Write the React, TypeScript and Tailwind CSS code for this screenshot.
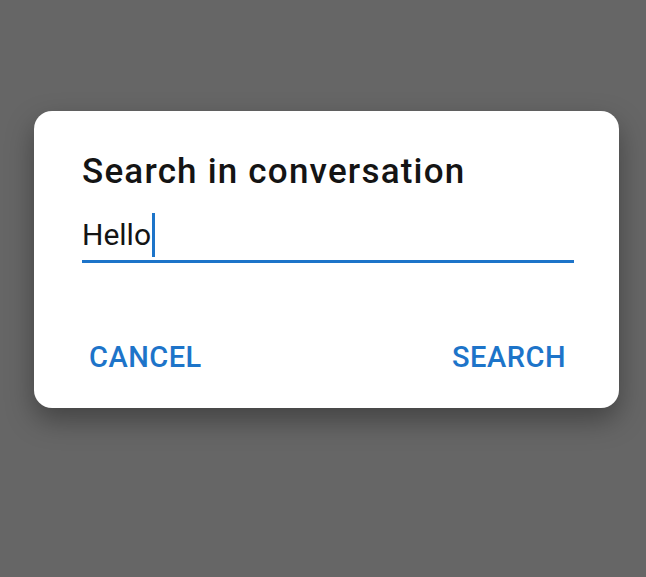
export default function App() {
  return (
    <div
      className="w-[646px] h-[577px] bg-[#666666] pl-[34px] pt-[111px]"
      style={{ fontFamily: "Roboto, 'Noto Sans', sans-serif" }}
    >
      <div className="w-[585px] h-[297px] bg-white rounded-[18px] shadow-[0_12px_28px_rgba(0,0,0,0.35)] pt-[40px] px-[48px] flex flex-col">
        <h1 className="text-[35px] leading-[41px] font-medium text-[#141414] tracking-[1.2px]">
          Search in conversation
        </h1>
        <div className="mt-[21px] mr-[-3px] border-b-[3px] border-[#1d74c9] pb-[3px] flex items-center">
          <span className="text-[30px] leading-[36px] text-[#141414]">Hello</span>
          <span className="w-[3px] h-[44px] bg-[#1d74c9] ml-[1px]" />
        </div>
        <div className="flex justify-between mt-[77px] pl-[7px] pr-[5px]">
          <button className="text-[29px] leading-[34px] font-medium text-[#1d74c9] tracking-[0.5px]">
            CANCEL
          </button>
          <button className="text-[29px] leading-[34px] font-medium text-[#1d74c9] tracking-[0.5px]">
            SEARCH
          </button>
        </div>
      </div>
    </div>
  );
}
